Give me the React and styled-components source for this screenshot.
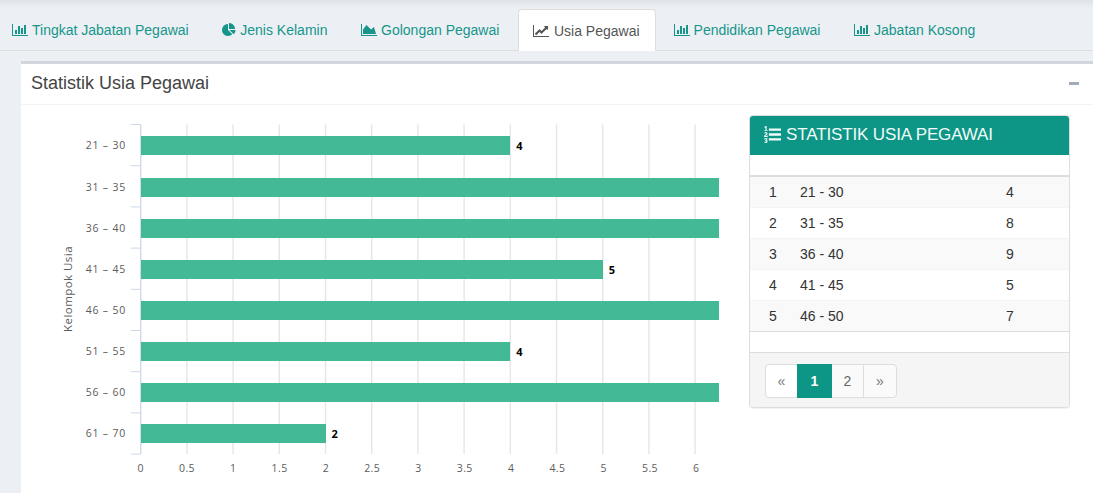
import React from "react";
import styled, { createGlobalStyle } from "styled-components";

const Global = createGlobalStyle`
  html, body { margin: 0; padding: 0; width: 1093px; height: 493px; overflow: hidden; }
  body { background: #ecf0f5; font-family: "Liberation Sans", Arial, sans-serif; font-size: 14px; color: #333; }
  * { box-sizing: border-box; }
`;

const Page = styled.div`
  height: 493px;
  padding-top: 9px;
  background: linear-gradient(#dfe2e7 0, #ecf0f5 8px);
`;
const TabBar = styled.nav`
  display: flex;
  height: 42px;
  padding-left: 12px;
  gap: 33.6px;
  border-bottom: 1px solid #ddd;
`;
const Tab = styled.a`
  display: flex;
  align-items: center;
  gap: ${(p) => (p.$active ? "5px" : "4px")};
  height: ${(p) => (p.$active ? "42px" : "41px")};
  line-height: 20px;
  color: ${(p) => (p.$active ? "#555" : "#16958a")};
  ${(p) =>
    p.$active &&
    `
    background: #fff;
    border: 1px solid #ddd;
    border-bottom: 0;
    border-radius: 4px 4px 0 0;
    padding: 0 15px 0 14px;
    margin: 0 -15.6px 0 -15px;
  `}
`;
const Icon = styled.svg`
  display: block;
  height: ${(p) => p.$h || 14}px;
  width: ${(p) => p.$w || 16}px;
  fill: currentColor;
  flex: none;
`;
const Box = styled.section`
  margin: 10px 0 0 21px;
  background: #fff;
  border-top: 3px solid #d2d6de;
  height: 440px;
`;
const BoxHeader = styled.header`
  display: flex;
  align-items: center;
  justify-content: space-between;
  height: 41px;
  padding: 0 14px 2px 10px;
  border-bottom: 1px solid #f4f4f4;
`;
const BoxTitle = styled.h3`
  margin: 0;
  font-size: 18px;
  font-weight: 400;
  line-height: 38px;
  color: #444;
`;
const Collapse = styled.span`
  display: block;
  width: 10px;
  height: 3px;
  background: #a3aab8;
`;
const BoxBody = styled.div`
  display: flex;
  align-items: flex-start;
`;
const Chart = styled.svg`
  display: block;
  width: 728px;
  height: 388px;
  flex: none;
  font-family: "Open Sans", sans-serif;
`;
const Panel = styled.aside`
  width: 321px;
  height: 293px;
  margin-top: 10px;
  background: #fff;
  border: 1px solid #ddd;
  border-radius: 4px;
  box-shadow: 0 1px 1px rgba(0, 0, 0, 0.05);
  overflow: hidden;
`;
const PanelHeading = styled.h4`
  display: flex;
  align-items: center;
  gap: 5px;
  height: 39px;
  margin: 0 -1px;
  padding: 0 15px 2px 15px;
  background: #0d9586;
  color: #f2fbf9;
  font-size: 17px;
  font-weight: 400;
  letter-spacing: -0.13px;
`;
const Table = styled.table`
  width: 100%;
  margin-top: 20px;
  border-collapse: collapse;
  border-top: 2px solid #ddd;
  border-bottom: 1px solid #ddd;
`;
const Row = styled.tr`
  background: ${(p) => (p.$odd ? "#f9f9f9" : "#fff")};
  border-top: 1px solid #f4f4f4;
`;
const Cell = styled.td`
  height: 31px;
  padding: 0 0 0 ${(p) => p.$pad}px;
  width: ${(p) => p.$w}px;
  color: #333;
  line-height: 20px;
`;
const PanelFooter = styled.footer`
  margin-top: 20px;
  height: 56px;
  padding: 11px 15px;
  background: #f5f5f5;
  border-top: 1px solid #ddd;
`;
const Pager = styled.ul`
  display: flex;
  list-style: none;
  margin: 0;
  padding: 0;
`;
const PageLink = styled.li`
  width: ${(p) => p.$w}px;
  height: 34px;
  margin-left: -1px;
  text-align: center;
  line-height: 32px;
  border: 1px solid ${(p) => (p.$active ? "#0d9586" : "#ddd")};
  background: ${(p) => (p.$active ? "#0d9586" : p.$first ? "#fff" : "#fafafa")};
  color: ${(p) => (p.$active ? "#fff" : p.$muted ? "#777" : "#666")};
  font-weight: ${(p) => (p.$active ? 700 : 400)};
  position: ${(p) => (p.$active ? "relative" : "static")};
  &:first-child { margin-left: 0; border-radius: 4px 0 0 4px; }
  &:last-child { border-radius: 0 4px 4px 0; }
`;

const paths = {
  bar: "M640 896v512h-256v-512h256zm384-512v1024h-256v-1024h256zm1024 1152v128h-2048v-1536h128v1408h1920zm-640-896v768h-256v-768h256zm384-384v1152h-256v-1152h256z",
  line: "M2048 1536v128h-2048v-1536h128v1408h1920zm-128-1248v435q0 21-19.5 29.5t-35.5-7.5l-121-121-633 633q-10 10-23 10t-23-10l-233-233-416 416-192-192 585-585q10-10 23-10t23 10l233 233 464-464-121-121q-16-16-7.5-35.5t29.5-19.5h435q14 0 23 9t9 23z",
  area: "M2048 1536v128h-2048v-1536h128v1408h1920zm-384-1024l256 896h-1664v-576l448-576 576 576z",
  pie: "M768 890l546 546q-106 108-247.5 168t-298.5 60q-209 0-385.5-103t-279.5-279.5-103-385.5 103-385.5 279.5-279.5 385.5-103v762zM955 892h773q0 157-60 298.5t-168 247.5zM1664 768h-768v-768q209 0 385.5 103t279.5 279.5 103 385.5z",
  list: "M381 1620q0 80-54.5 126t-135.5 46q-106 0-172-66l57-88q49 45 106 45 29 0 50.5-14.5t21.5-42.5q0-64-105-56l-26-56q8-10 32.5-43.5t42.5-54 37-38.5v-1q-16 0-48.5 1t-48.5 1v53h-106v-152h333v88l-95 115q51 12 81 49t30 88zm2-627v159h-362q-6-36-6-54 0-51 23.5-93t56.5-68 66-47.5 56.5-43.5 23.5-45q0-25-14.5-38.5t-39.5-13.5q-46 0-81 58l-85-59q24-51 71.5-79.5t105.5-28.5q73 0 123 41.5t50 112.5q0 50-34 91.5t-75 64.5-75.5 50.5-35.5 52.5h127v-60h105zm1409 319v192q0 13-9.5 22.5t-22.5 9.5h-1216q-13 0-22.5-9.5t-9.5-22.5v-192q0-14 9-23t23-9h1216q13 0 22.5 9.5t9.5 22.5zm-1408-899v99h-335v-99h107q0-41 .5-122t.5-121v-12h-2q-8 17-50 54l-71-76 136-127h106v404h108zm1408 387v192q0 13-9.5 22.5t-22.5 9.5h-1216q-13 0-22.5-9.5t-9.5-22.5v-192q0-14 9-23t23-9h1216q13 0 22.5 9.5t9.5 22.5zm0-512v192q0 13-9.5 22.5t-22.5 9.5h-1216q-13 0-22.5-9.5t-9.5-22.5v-192q0-13 9.5-22.5t22.5-9.5h1216q13 0 22.5 9.5t9.5 22.5z",
};

const FaIcon = ({ name, size }) => {
  const square = name === "pie" || name === "list";
  const h = size || 14;
  return (
    <Icon $h={h} $w={square ? h : 16} viewBox={square ? "0 0 1792 1792" : "0 0 2048 1792"} aria-hidden="true">
      <path d={paths[name]} />
    </Icon>
  );
};

const tabs = [
  ["bar", "Tingkat Jabatan Pegawai"],
  ["pie", "Jenis Kelamin"],
  ["area", "Golongan Pegawai"],
  ["line", "Usia Pegawai", true],
  ["bar", "Pendidikan Pegawai"],
  ["bar", "Jabatan Kosong"],
];

const cats = [
  ["21 – 30", 4],
  ["31 – 35", 8],
  ["36 – 40", 9],
  ["41 – 45", 5],
  ["46 – 50", 7],
  ["51 – 55", 4],
  ["56 – 60", 8],
  ["61 – 70", 2],
];
const X0 = 140.7;
const UNIT = 92.4;
const LABEL_UNIT = 92.6;
const RIGHT = 719;
const TOP = 124.5;
const STEP = 41.2;
const xTicks = Array.from({ length: 13 }, (_, i) => i * 0.5);

const BarChart = () => (
  <Chart viewBox="21 105 728 388">
    {xTicks.map((t) => (
      <line key={t} x1={X0 + t * UNIT} x2={X0 + t * UNIT} y1={TOP} y2={TOP + STEP * 8} stroke="#e6e6e6" strokeWidth="1.4" />
    ))}
    <line x1={X0} x2={X0} y1={TOP} y2={TOP + STEP * 8} stroke="#ccd6eb" />
    {Array.from({ length: 9 }, (_, i) => (
      <line key={i} x1={131} x2={X0} y1={TOP + i * STEP} y2={TOP + i * STEP} stroke="#ccd6eb" />
    ))}
    {cats.map(([label, v], i) => {
      const y = Math.floor(136.9 + i * 41.15);
      const w = Math.min(v * UNIT, RIGHT - X0);
      const inside = v * UNIT <= RIGHT - X0;
      return (
        <g key={label}>
          <rect x={X0} y={y} width={w} height={19} fill="#43b995" shapeRendering="crispEdges" />
          <text x={126} y={y + 13} textAnchor="end" fontSize="10.5" letterSpacing="0.8" fill="#5c5c5c">
            {label}
          </text>
          {inside && (
            <text x={X0 + w + 6} y={y + 14} fontSize="11" fontWeight="700" fill="#000">
              {v}
            </text>
          )}
        </g>
      );
    })}
    {xTicks.map((t) => (
      <text key={t} x={X0 + t * LABEL_UNIT} y={472} textAnchor="middle" fontSize="10.5" letterSpacing="0.4" fill="#5c5c5c">
        {t}
      </text>
    ))}
    <text transform="translate(72 289) rotate(-90)" textAnchor="middle" fontSize="11.5" letterSpacing="0.45" fill="#5c5c5c">
      Kelompok Usia
    </text>
  </Chart>
);

const rows = [
  [1, "21 - 30", 4],
  [2, "31 - 35", 8],
  [3, "36 - 40", 9],
  [4, "41 - 45", 5],
  [5, "46 - 50", 7],
];

export default function App() {
  return (
    <Page>
      <Global />
      <TabBar>
        {tabs.map(([icon, label, active]) => (
          <Tab key={label} $active={active}>
            <FaIcon name={icon} />
            {label}
          </Tab>
        ))}
      </TabBar>
      <Box>
        <BoxHeader>
          <BoxTitle>Statistik Usia Pegawai</BoxTitle>
          <Collapse />
        </BoxHeader>
        <BoxBody>
          <BarChart />
          <Panel>
            <PanelHeading>
              <FaIcon name="list" size={17} />
              STATISTIK USIA PEGAWAI
            </PanelHeading>
            <Table>
              <tbody>
                {rows.map(([n, range, count], i) => (
                  <Row key={n} $odd={i % 2 === 0}>
                    <Cell $pad={19} $w={50}>{n}</Cell>
                    <Cell $pad={0} $w={206}>{range}</Cell>
                    <Cell $pad={0}>{count}</Cell>
                  </Row>
                ))}
              </tbody>
            </Table>
            <PanelFooter>
              <Pager>
                <PageLink $w={33} $first $muted>«</PageLink>
                <PageLink $w={35} $active>1</PageLink>
                <PageLink $w={33}>2</PageLink>
                <PageLink $w={34} $muted>»</PageLink>
              </Pager>
            </PanelFooter>
          </Panel>
        </BoxBody>
      </Box>
    </Page>
  );
}
